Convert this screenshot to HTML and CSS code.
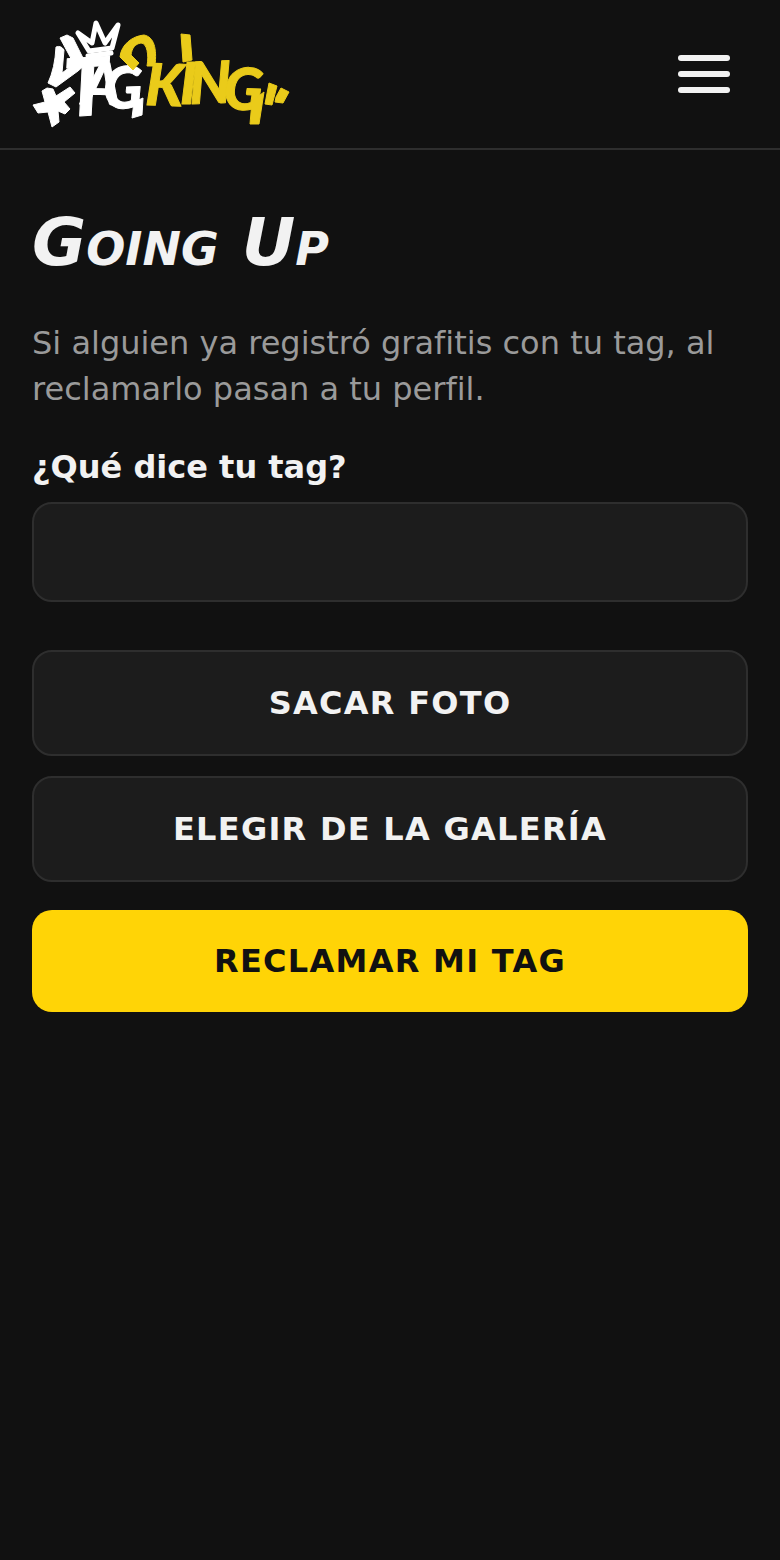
FILE: index.html
```html
<!DOCTYPE html>
<html lang="es">
<head>
    <meta charset="UTF-8">
    <meta name="viewport" content="width=device-width, initial-scale=1.0">
    <title>Tag King - Going Up</title>
    <link rel="stylesheet" href="styles.css">
</head>
<body>
    <header class="header">
        <a href="#" class="logo" aria-label="Tag King">
            <svg viewBox="32 20 258 108" width="258" height="108">
                <!-- estrella -->
                <path class="white" d="M33 105L45 102L42 91L47 88L53 89L56 96L70 87L75 93L64 102L70 109L65 114L58 111L59 122L52 127L48 112L38 113Z"/>
                <!-- corona -->
                <path class="crown" d="M78 33L89 51L112 48L118 25L105 43L96 23L92 43Z"/>
                <path class="crown" d="M88 56L111 53"/>
                <!-- adornos a la izquierda de la T -->
                <path class="white" d="M56 47Q61 45 64 50L62 73L74 64L60 38L67 35L73 38L86 64L78 71L56 87L48 83Q55 68 56 47Z"/>
                <text class="letters white" x="66 82 104" y="117 104 109" rotate="-4 2 -2"><tspan class="big">T</tspan>AG</text>
                <path class="white" d="M134 102L143 98L142 115L132 118Z"/>
                <!-- lazo sobre la K -->
                <path class="yellow" d="M133 70L120 57C121 45 132 36 144 35C154 37 157 48 155 66L147 66C149 55 147 43 141 43C135 44 132 48 131 55L139 63Z"/>
                <text class="letters yellow" x="145 180 190 223" y="105 104 104 109" rotate="2 0 -2 2">KING</text>
                <path class="yellow" d="M181 34L190 35L192 60L183 62Z"/>
                <path class="yellow" d="M252 101L264 92L259 124L250 124Z"/>
                <path class="yellow" d="M269 83L277 86L272 105L265 104Z"/>
                <path class="yellow" d="M281 88L289 92L283 103L275 102L276 97Z"/>
            </svg>
        </a>
        <button type="button" class="menu-btn" aria-label="Abrir menú">
            <span></span>
            <span></span>
            <span></span>
        </button>
    </header>

    <main class="container">
        <h1>Going Up</h1>
        <p class="intro">Si alguien ya registró grafitis con tu tag, al reclamarlo pasan a tu perfil.</p>
        <form class="claim-form">
            <label for="tag">¿Qué dice tu tag?</label>
            <input type="text" id="tag" name="tag">
            <div class="photo-buttons">
                <button type="button" class="btn">Sacar foto</button>
                <button type="button" class="btn">Elegir de la galería</button>
            </div>
            <button type="submit" class="btn btn-primary">Reclamar mi tag</button>
        </form>
    </main>
</body>
</html>
```
FILE: styles.css
```css
* {
    box-sizing: border-box;
}
body {
    margin: 0;
    min-height: 100vh;
    background-color: #111;
    color: #f2f2f2;
    font-family: "DejaVu Sans", sans-serif;
    font-size: 32px;
    line-height: 46px;
}
.header {
    display: flex;
    justify-content: space-between;
    align-items: center;
    padding: 20px 32px;
    border-bottom: 2px solid #2e2e2e;
}
.logo svg {
    display: block;
}
.white {
    fill: #fff;
    stroke: #fff;
}
.yellow {
    fill: #eacb1a;
    stroke: #eacb1a;
}
.white,
.yellow {
    stroke-width: 1px;
    stroke-linejoin: round;
}
.crown {
    fill: none;
    stroke: #fff;
    stroke-width: 5px;
    stroke-linejoin: round;
    stroke-linecap: round;
}
.letters {
    font-family: Lato, sans-serif;
    font-size: 58px;
    font-weight: 900;
    font-style: italic;
}
.letters .big {
    font-size: 80px;
}
.menu-btn {
    display: flex;
    flex-direction: column;
    gap: 10px;
    padding: 18px;
    border: none;
    background: none;
    cursor: pointer;
}
.menu-btn span {
    width: 52px;
    height: 6px;
    border-radius: 3px;
    background-color: #f2f2f2;
}
.container {
    padding: 48px 32px;
}
.container h1 {
    margin: 0 0 32px;
    font-family: "Permanent Marker", "DejaVu Sans", sans-serif;
    font-size: 66px;
    font-weight: bold;
    font-style: italic;
    font-variant: small-caps;
    line-height: 90px;
}
.intro {
    margin: 0 0 32px;
    color: #9a9a9a;
}
.claim-form {
    display: flex;
    flex-direction: column;
}
.claim-form label {
    margin-bottom: 12px;
    font-weight: bold;
}
.claim-form input {
    height: 100px;
    padding: 24px;
    border: 2px solid #2e2e2e;
    border-radius: 20px;
    background-color: #1c1c1c;
    color: #f2f2f2;
    font: inherit;
}
.photo-buttons {
    display: flex;
    flex-direction: column;
    gap: 20px;
    margin: 48px 0 28px;
}
.btn {
    padding: 28px;
    border: 2px solid #2e2e2e;
    border-radius: 20px;
    background-color: #1c1c1c;
    color: #f2f2f2;
    font: inherit;
    font-weight: bold;
    letter-spacing: 0.04em;
    text-transform: uppercase;
    cursor: pointer;
}
.btn-primary {
    border: none;
    background-color: #ffd406;
    color: #111;
}
```
